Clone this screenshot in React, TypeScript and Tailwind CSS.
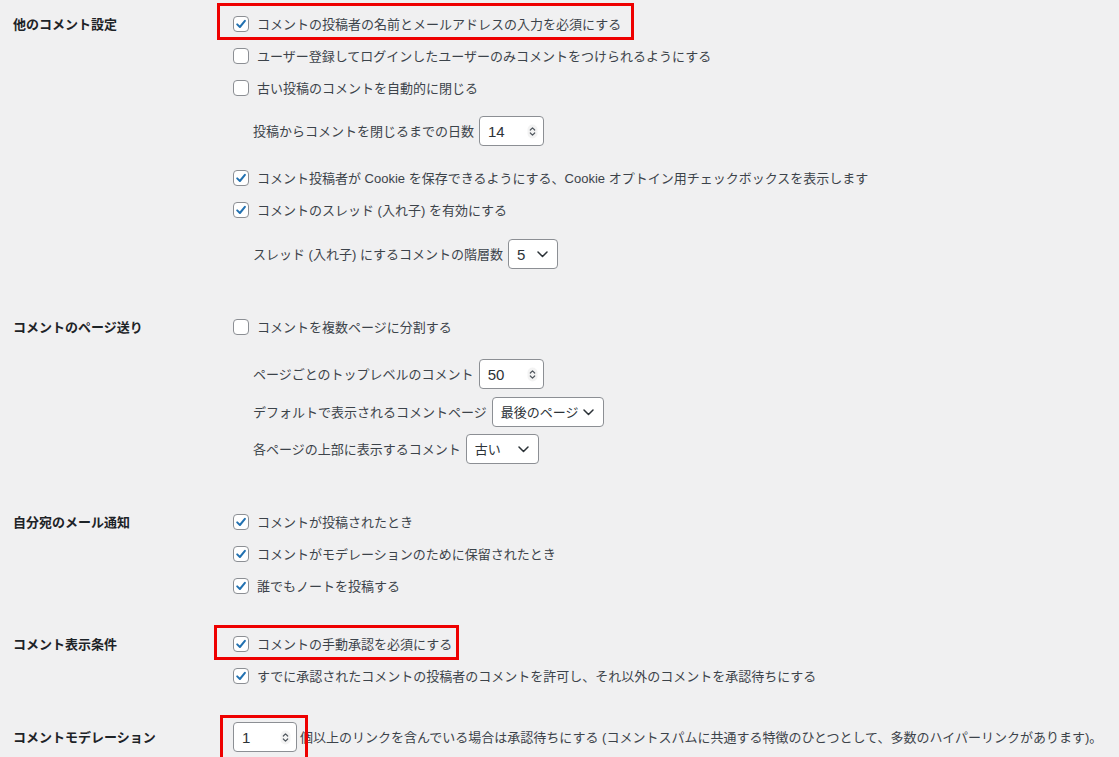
import React from 'react';

const FONT = { fontFamily: '"Liberation Sans", "Noto Sans CJK JP", sans-serif' };

const Checkbox: React.FC<{ checked?: boolean }> = ({ checked }) => (
  <span className="w-4 h-4 shrink-0 rounded-[4px] border border-[#8c8f94] bg-white flex items-center justify-center">
    {checked && (
      <svg width="12" height="12" viewBox="0 0 12 12">
        <path d="M2.2 6.4 L4.9 9 L9.9 2.8" fill="none" stroke="#2271b1" strokeWidth="2" strokeLinecap="round" strokeLinejoin="round" />
      </svg>
    )}
  </span>
);

const CheckRow: React.FC<{ checked?: boolean; label: string; children?: React.ReactNode }> = ({ checked, label, children }) => (
  <div className="relative h-8 flex items-center gap-2">
    <Checkbox checked={checked} />
    <span>{label}</span>
    {children}
  </div>
);

const Spinner = () => (
  <svg width="11" height="15" viewBox="0 0 11 15">
    <rect x="0.5" y="0.5" width="10" height="14" rx="5" fill="#f3f3f3" />
    <path d="M3.3 6 L5.5 3.8 L7.7 6" fill="none" stroke="#50575e" strokeWidth="1.2" strokeLinecap="round" strokeLinejoin="round" />
    <path d="M3.3 9 L5.5 11.2 L7.7 9" fill="none" stroke="#50575e" strokeWidth="1.2" strokeLinecap="round" strokeLinejoin="round" />
  </svg>
);

const NumberBox: React.FC<{ value: string; className?: string }> = ({ value, className = 'w-[65px]' }) => (
  <span className={`${className} h-[30px] shrink-0 rounded-[4px] border border-[#8c8f94] bg-white pl-2 pr-[5px] flex items-center justify-between text-[15px] text-[#2c3338]`}>
    <span>{value}</span>
    <Spinner />
  </span>
);

const Chevron = () => (
  <svg width="11" height="7" viewBox="0 0 11 7">
    <path d="M1 1 L5.5 5.5 L10 1" fill="none" stroke="#2c3338" strokeWidth="1.5" strokeLinecap="round" strokeLinejoin="round" />
  </svg>
);

const SelectBox: React.FC<{ value: string; width: string; big?: boolean }> = ({ value, width, big }) => (
  <span className={`${width} h-[30px] shrink-0 rounded-[4px] border border-[#8c8f94] bg-white pl-2 pr-[9px] flex items-center justify-between text-[#2c3338] ${big ? 'text-[15px]' : ''}`}>
    <span>{value}</span>
    <Chevron />
  </span>
);

const Section: React.FC<{ title: string; className?: string; first?: string; children: React.ReactNode }> = ({ title, className = '', first = 'h-8', children }) => (
  <div className={`flex ${className}`}>
    <div className="w-[233px] shrink-0 pl-[13px]">
      <div className={`${first} flex items-center font-semibold text-[#1d2327]`}>{title}</div>
    </div>
    <div className="flex-1">{children}</div>
  </div>
);

export default function App() {
  return (
    <div style={FONT} className="w-[1119px] h-[757px] overflow-hidden bg-[#f0f0f1] text-[13px] leading-none text-[#3c434a]">
      <div className="pt-2">
        <Section title="他のコメント設定">
          <CheckRow checked label="コメントの投稿者の名前とメールアドレスの入力を必須にする">
            <span className="absolute left-[-16px] top-[-5px] w-[417px] h-[37px] border-[3px] border-[#ee0000] pointer-events-none" />
          </CheckRow>
          <CheckRow label="ユーザー登録してログインしたユーザーのみコメントをつけられるようにする" />
          <CheckRow label="古い投稿のコメントを自動的に閉じる" />
          <div className="mt-3 h-[30px] pl-5 flex items-center gap-[5px]">
            <span>投稿からコメントを閉じるまでの日数</span>
            <NumberBox value="14" />
          </div>
          <div className="mt-4">
            <CheckRow checked label="コメント投稿者が Cookie を保存できるようにする、Cookie オプトイン用チェックボックスを表示します" />
            <CheckRow checked label="コメントのスレッド (入れ子) を有効にする" />
          </div>
          <div className="mt-[13px] h-[30px] pl-5 flex items-center gap-[5px]">
            <span>スレッド (入れ子) にするコメントの階層数</span>
            <SelectBox value="5" width="w-[50px]" big />
          </div>
        </Section>

        <Section title="コメントのページ送り" className="mt-[42px]">
          <CheckRow label="コメントを複数ページに分割する" />
          <div className="mt-4 h-[30px] pl-5 flex items-center gap-[5px]">
            <span>ページごとのトップレベルのコメント</span>
            <NumberBox value="50" />
          </div>
          <div className="mt-2 h-[30px] pl-5 flex items-center gap-[5px]">
            <span>デフォルトで表示されるコメントページ</span>
            <SelectBox value="最後のページ" width="w-[112px]" />
          </div>
          <div className="mt-[7px] h-[30px] pl-5 flex items-center gap-[5px]">
            <span>各ページの上部に表示するコメント</span>
            <SelectBox value="古い" width="w-[73px]" />
          </div>
        </Section>

        <Section title="自分宛のメール通知" className="mt-[42px]">
          <CheckRow checked label="コメントが投稿されたとき" />
          <CheckRow checked label="コメントがモデレーションのために保留されたとき" />
          <CheckRow checked label="誰でもノートを投稿する" />
        </Section>

        <Section title="コメント表示条件" className="mt-[26px]">
          <CheckRow checked label="コメントの手動承認を必須にする">
            <span className="absolute left-[-19px] top-[-3px] w-[245px] h-[35px] border-[3px] border-[#ee0000] pointer-events-none" />
          </CheckRow>
          <CheckRow checked label="すでに承認されたコメントの投稿者のコメントを許可し、それ以外のコメントを承認待ちにする" />
        </Section>

        <Section title="コメントモデレーション" className="mt-[30px]" first="h-[30px]">
          <div className="relative h-[30px] flex items-center gap-[3px]">
            <span className="relative">
              <NumberBox value="1" className="w-[64px]" />
              <span className="absolute left-[-13px] top-[-7px] w-[88px] h-[46px] border-[3px] border-[#ee0000] pointer-events-none" />
            </span>
            <span className="whitespace-nowrap">個以上のリンクを含んでいる場合は承認待ちにする (コメントスパムに共通する特徴のひとつとして、多数のハイパーリンクがあります)。</span>
          </div>
        </Section>
      </div>
    </div>
  );
}
